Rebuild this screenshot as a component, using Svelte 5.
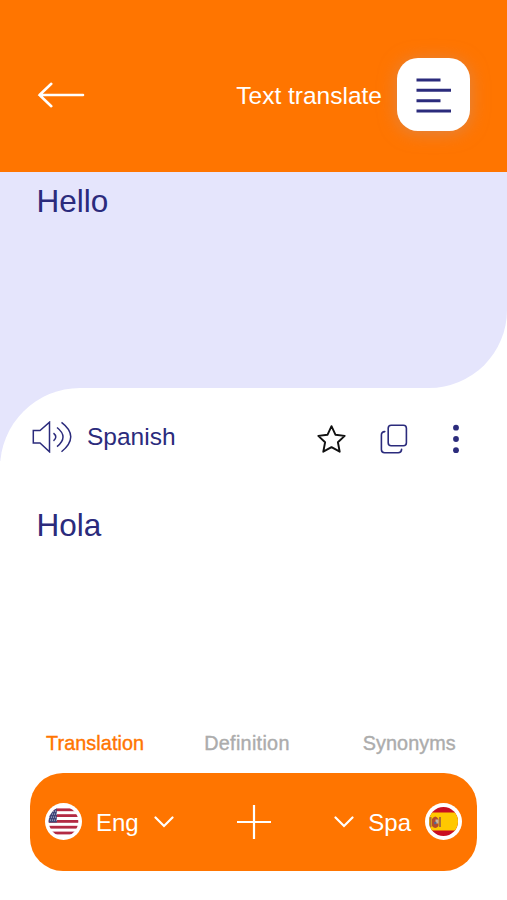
<script>
  const tabs = ["Translation", "Definition", "Synonyms"];
  let current = "Translation";
  const stripes = [0, 1, 2, 3, 4];
  const stars = [0, 1, 2, 3];
</script>

<style>
  :global(body) {
    margin: 0;
    background: #fff;
  }

  .app {
    --orange: #ff7500;
    --navy: #2b2b7c;
    --lavender: #e5e5fc;
    display: flex;
    flex-direction: column;
    width: 507px;
    height: 900px;
    overflow: hidden;
    background: #fff;
    color: var(--navy);
    font-family: "Liberation Sans", Arial, sans-serif;
    font-size: 24px;
    line-height: 28px;
  }

  button {
    display: flex;
    align-items: center;
    padding: 0;
    border: 0;
    background: none;
    color: inherit;
    font: inherit;
    cursor: pointer;
  }

  svg {
    display: block;
    flex: none;
    fill: none;
  }

  header {
    display: flex;
    align-items: center;
    box-sizing: border-box;
    height: 171.5px;
    padding: 18px 37px 0;
    background: var(--orange);
    color: #fff;
  }

  h1 {
    margin: 2px 15px 0 auto;
    font-size: 24.5px;
    font-weight: normal;
  }

  .menu {
    justify-content: center;
    width: 73px;
    height: 73px;
    border-radius: 21px;
    background: #fff;
    color: var(--navy);
    box-shadow: 0 2px 18px rgba(200, 145, 120, 0.6);
  }

  .word {
    margin: 0;
    font-size: 31.5px;
    line-height: 36px;
  }

  .source {
    box-sizing: border-box;
    height: 216.5px;
    padding: 11px 36.5px;
    border-bottom-right-radius: 78px;
    background: var(--lavender);
  }

  .result {
    background: linear-gradient(var(--lavender), var(--lavender)) no-repeat 0 0 / 80px 73px;
  }

  .sheet {
    box-sizing: border-box;
    height: 338px;
    padding: 30px 35px 0 32px;
    border-top-left-radius: 80px;
    background: #fff;
  }

  .tools {
    display: flex;
    align-items: center;
    height: 40px;
  }

  .listen {
    margin-top: -3px;
  }

  .language {
    margin: -2px auto 0 15px;
    font-size: 24.5px;
  }

  .actions {
    display: flex;
    align-items: center;
    margin: 1px 12px 0 0;
  }

  .star { margin-right: 34px; }
  .copy { margin-right: 44px; }

  .sheet .word {
    margin: 49px 0 0 4.5px;
  }

  nav {
    display: flex;
    padding: 6px 0 0 46px;
  }

  nav button {
    color: #acacac;
    font-size: 19.8px;
    line-height: 23px;
    letter-spacing: 0.1px;
    -webkit-text-stroke: 0.4px currentColor;
  }

  nav button:nth-child(2) {
    margin: 0 73px 0 60px;
    letter-spacing: 0.3px;
  }

  nav button.active {
    color: var(--orange);
  }

  .bar {
    display: flex;
    align-items: center;
    justify-content: space-between;
    box-sizing: border-box;
    width: 447px;
    height: 98px;
    margin: 17.5px 0 0 30px;
    padding: 0 15px;
    border-radius: 33px;
    background: var(--orange);
    color: #fff;
  }

  .bar span { margin: 2px 15px 0 14px; }
  .bar .to span { margin: 2px 14px 0; }
</style>

<div class="app">
  <header>
    <button aria-label="Back">
      <svg width="48" height="28" viewBox="0 0 48 28" stroke="#fff" stroke-width="2.6" stroke-linecap="round">
        <path d="M46 14H2.5M14.3 2.8L2.5 14l11.8 11.2" />
      </svg>
    </button>
    <h1>Text translate</h1>
    <button class="menu" aria-label="Menu">
      <svg width="36" height="36" viewBox="0 0 36 36" stroke="currentColor" stroke-width="3">
        <path d="M.5 3h24M.5 13.3H35M.5 23.7h24M.5 34H35" />
      </svg>
    </button>
  </header>

  <section class="source">
    <p class="word">Hello</p>
  </section>

  <section class="result">
    <div class="sheet">
      <div class="tools">
        <button class="listen" aria-label="Listen">
          <svg width="40" height="32" viewBox="0 0 40 32" stroke="currentColor" stroke-width="1.5">
            <path d="M1.3 9.5H8L17.5 1.2v29.6L8 22H1.3z" />
            <path d="M21.5 12.2q4.6 3.8 0 7.6M25 6.5q12 9.5 0 19.2M29.5 1.3q18.5 14 0 29.5" />
          </svg>
        </button>
        <span class="language">Spanish</span>
        <div class="actions">
          <button class="star" aria-label="Save">
            <svg width="30" height="30" viewBox="0 0 30 30" stroke="#111" stroke-width="1.9" stroke-linejoin="round">
              <path d="M15.5 2.2l3.9 8.5 9.3 1.2-6.8 6.4 1.8 9.4-8.2-4.5-8.2 4.5 1.8-9.4-6.8-6.4 9.3-1.2z" />
            </svg>
          </button>
          <button class="copy" aria-label="Copy">
            <svg width="28" height="30" viewBox="0 0 28 30" stroke="currentColor" stroke-width="1.6" stroke-linecap="round">
              <rect x="8.2" y="1.3" width="18.2" height="20.5" rx="3" />
              <path d="M4.8 7.6Q1.4 7.8 1.4 11v14.5q0 3.2 3.2 3.2h13.6q3.2 0 3.4-3.3" />
            </svg>
          </button>
          <button aria-label="More">
            <svg width="8" height="30" viewBox="0 0 8 30">
              <g fill="currentColor">
                <circle cx="4" cy="3.7" r="2.9" />
                <circle cx="4" cy="15" r="2.9" />
                <circle cx="4" cy="26.2" r="2.9" />
              </g>
            </svg>
          </button>
        </div>
      </div>
      <p class="word">Hola</p>
    </div>
  </section>

  <nav>
    {#each tabs as tab}
      <button class:active={tab === current} on:click={() => (current = tab)}>{tab}</button>
    {/each}
  </nav>

  <div class="bar">
    <button>
      <svg width="37" height="37" viewBox="0 0 37 37">
        <clipPath id="us"><circle cx="18.5" cy="18.5" r="14.8" /></clipPath>
        <circle cx="18.5" cy="18.5" r="18.5" fill="#fff" />
        <g clip-path="url(#us)">
          {#each stripes as i}
            <rect x="3" y={5.4 + i * 5.8} width="31" height="2.8" fill="#b32a43" />
          {/each}
          <rect x="3" y="3" width="8.8" height="16.5" fill="#3f4678" />
          {#each stars as row}
            {#each stars as col}
              <circle cx={4.5 + col * 2 + (row % 2)} cy={8 + row * 3} r="0.55" fill="#d8daea" />
            {/each}
          {/each}
        </g>
      </svg>
      <span>Eng</span>
      <svg width="20" height="12" viewBox="0 0 20 12" stroke="#fff" stroke-width="2.2" stroke-linecap="round">
        <path d="M1.5 1.5L10 10l8.5-8.5" />
      </svg>
    </button>
    <button aria-label="Add">
      <svg width="36" height="36" viewBox="0 0 36 36" stroke="#fff" stroke-width="2.2">
        <path d="M18 1v34M1 18h34" />
      </svg>
    </button>
    <button class="to">
      <svg width="20" height="12" viewBox="0 0 20 12" stroke="#fff" stroke-width="2.2" stroke-linecap="round">
        <path d="M1.5 1.5L10 10l8.5-8.5" />
      </svg>
      <span>Spa</span>
      <svg width="37" height="37" viewBox="0 0 37 37">
        <clipPath id="es"><circle cx="18.5" cy="18.5" r="14.5" /></clipPath>
        <circle cx="18.5" cy="18.5" r="18.5" fill="#fff" />
        <g clip-path="url(#es)">
          <rect width="37" height="37" fill="#c90e21" />
          <rect y="9.5" width="37" height="18" fill="#ffc800" />
          <rect x="4.5" y="14" width="2" height="10" fill="#a96f38" />
          <rect x="14" y="14" width="2" height="10" fill="#a96f38" />
          <path d="M7 16q3.3-5 6.5 0v7q-3.2 4-6.5 0z" fill="#b34b2c" />
          <path d="M10.5 16.5h3v4h-3z" fill="#c9b6a0" />
          <circle cx="10.3" cy="20" r="1.3" fill="#526a92" />
        </g>
      </svg>
    </button>
  </div>
</div>
